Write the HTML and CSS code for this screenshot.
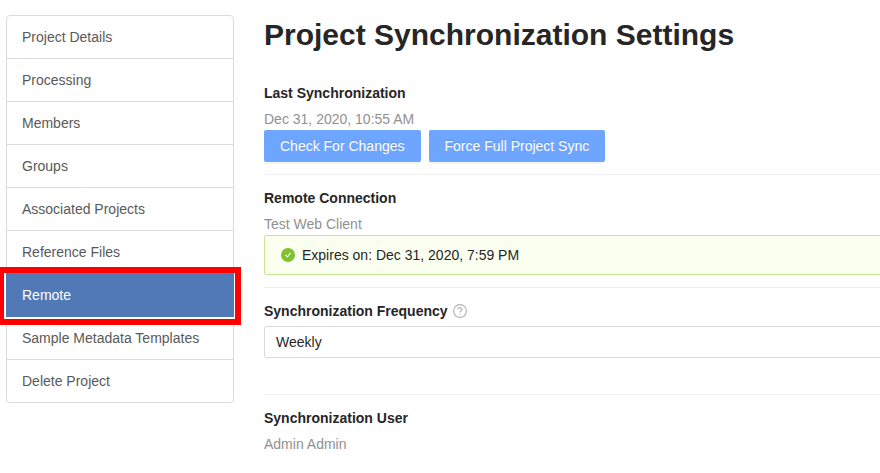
FILE: index.html
```html
<!DOCTYPE html>
<html lang="en">
<head>
<meta charset="utf-8">
<title>Project Synchronization Settings</title>
<link rel="stylesheet" href="styles.css">
</head>
<body>
<div class="layout">
  <nav class="menu">
    <a>Project Details</a>
    <a>Processing</a>
    <a>Members</a>
    <a>Groups</a>
    <a>Associated Projects</a>
    <a>Reference Files</a>
    <a class="active">Remote</a>
    <a>Sample Metadata Templates</a>
    <a>Delete Project</a>
  </nav>
  <main class="content">
    <h1>Project Synchronization Settings</h1>
    <section class="item last-sync">
      <h2>Last Synchronization</h2>
      <p>Dec 31, 2020, 10:55 AM</p>
      <div class="buttons"><button>Check For Changes</button><button>Force Full Project Sync</button></div>
    </section>
    <section class="item">
      <h2>Remote Connection</h2>
      <p>Test Web Client</p>
      <div class="alert">
        <svg width="14" height="14" viewBox="0 0 14 14"><circle cx="7" cy="7" r="7" fill="#7fc12e"/><path d="M4.5 6.9 6.4 9 9.5 4.9" fill="none" stroke="#fff" stroke-width="1.1"/></svg>
        <span>Expires on: Dec 31, 2020, 7:59 PM</span>
      </div>
    </section>
    <section class="item frequency">
      <h2>Synchronization Frequency <svg class="help" width="14" height="14" viewBox="0 0 14 14"><g fill="none" stroke="#b3b3b3" stroke-width="1.1"><circle cx="7" cy="7" r="6.4"/><path d="M5 5.6C5 3 9 3 9 5.5 9 7 7 6.9 7 8.4"/></g><circle cx="7" cy="10.1" r=".65" fill="#b3b3b3"/></svg></h2>
      <div class="select">Weekly</div>
    </section>
    <section class="item">
      <h2>Synchronization User</h2>
      <p>Admin Admin</p>
    </section>
  </main>
</div>
</body>
</html>
```
FILE: styles.css
```css
* { box-sizing: border-box; }
body { margin: 0; background: #fff; color: #262626; font: 14px/22px "Liberation Sans", Arial, sans-serif; overflow: hidden; }
.layout { display: flex; align-items: flex-start; gap: 30px; height: 473px; padding: 15px 0 0 6px; overflow: hidden; }
.menu { flex: none; width: 228px; border: 1px solid #d9dbdc; border-radius: 4px; }
.menu a { position: relative; display: block; height: 43px; padding: 10px 15px; border-bottom: 1px solid #d9dbdc; color: #595959; }
.menu a:last-child { height: 42px; border-bottom: 0; }
.menu .active { height: 44px; margin: -1px -1px 0; padding: 11px 16px; background: #5179b6; border-color: #5179b6; color: #fff; }
.menu .active::after { content: ""; position: absolute; inset: -6px -7px -9px -8px; border: 6px solid #f00; box-shadow: inset 0 -2px #fff, inset -1px 0 #fff, inset 2px 0 #fff; z-index: 1; }
.content { flex: none; width: 700px; }
h1 { margin: 0 0 27px; font-size: 30px; line-height: 40px; }
h2 { margin: 0; font-size: 14px; line-height: 22px; }
p { margin: 4px 0 0; color: #919191; }
.item { padding: 12px 0; border-bottom: 1px solid #f0f0f0; }
.item:last-child { border: 0; }
.last-sync { padding-top: 0; }
.buttons { display: flex; gap: 8px; }
button { height: 32px; padding: 0 16px; border: 0; border-radius: 2px; background: #6ea6ff; box-shadow: 0 2px 0 rgba(0, 0, 0, .04); color: #fff; font: inherit; text-shadow: 0 -1px 0 rgba(0, 0, 0, .12); }
.alert { display: flex; align-items: center; gap: 7px; height: 40px; padding: 0 16px; border: 1px solid #c5e793; border-radius: 2px; background: #fafff0; }
.help { margin-left: 2px; vertical-align: -2px; }
.select { height: 32px; margin-top: 4px; padding: 4px 11px; border: 1px solid #d9d9d9; border-radius: 2px; }
.frequency { padding-bottom: 36px; }
```
